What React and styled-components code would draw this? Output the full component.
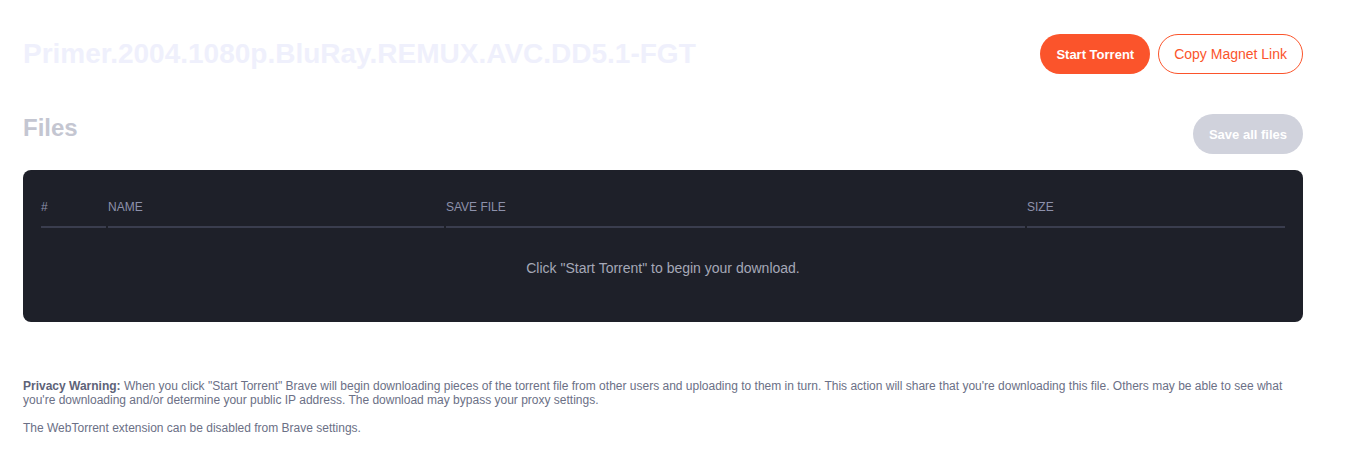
import React from 'react';
import styled, { createGlobalStyle } from 'styled-components';

const Global = createGlobalStyle`
  body {
    margin: 0;
    background: #ffffff;
    font-family: "Liberation Sans", Arial, sans-serif;
  }
`;

const Page = styled.div`
  width: 1280px;
  padding: 34px 23px 20px;
`;

const Header = styled.header`
  display: flex;
  align-items: center;
  justify-content: space-between;
  height: 40px;
`;

const Title = styled.h1`
  margin: 0;
  font-size: 28px;
  font-weight: bold;
  color: #eff0fc;
`;

const Actions = styled.div`
  display: flex;
  gap: 8px;
`;

const Button = styled.button`
  height: 40px;
  padding: 0 15px;
  border-radius: 20px;
  font-family: inherit;
  cursor: pointer;
  border: 1px solid ${p => (p.$variant === 'ghost' ? '#fb542b' : 'transparent')};
  background: ${p =>
    p.$variant === 'ghost' ? '#ffffff' : p.$variant === 'disabled' ? '#d0d2dc' : '#fb542b'};
  color: ${p => (p.$variant === 'ghost' ? '#fb542b' : '#ffffff')};
  font-weight: ${p => (p.$variant === 'ghost' ? 'normal' : 'bold')};
  font-size: ${p => (p.$variant === 'ghost' ? '14px' : '13px')};
`;

const SectionHead = styled.div`
  display: flex;
  align-items: flex-start;
  justify-content: space-between;
  height: 40px;
  margin-top: 40px;
  margin-bottom: 16px;
`;

const Heading = styled.h2`
  margin: 0;
  line-height: 28px;
  font-size: 24px;
  font-weight: bold;
  color: #c4c6d1;
`;

const Card = styled.div`
  background: #1e2029;
  border-radius: 8px;
  padding: 18px 18px 14px;
`;

const Grid = styled.div`
  display: grid;
  grid-template-columns: 65px 336px 579px 1fr;
  column-gap: 2px;
`;

const Th = styled.div`
  padding: 12px 0;
  line-height: 14px;
  font-size: 12px;
  text-transform: uppercase;
  color: #8d91ab;
  border-bottom: 2px solid #3a3d4e;
`;

const Empty = styled.div`
  grid-column: 1 / -1;
  padding: 32px 0;
  line-height: 16px;
  font-size: 14px;
  text-align: center;
  color: #a5a8b7;
`;

const Notice = styled.div`
  margin-top: 57px;
  font-size: 12px;
  line-height: 14px;
  color: #6b7086;

  p {
    margin: 0 0 14px;
  }

  strong {
    color: #5e6378;
  }
`;

export default function App() {
  return (
    <Page>
      <Global />
      <Header>
        <Title>Primer.2004.1080p.BluRay.REMUX.AVC.DD5.1-FGT</Title>
        <Actions>
          <Button>Start Torrent</Button>
          <Button $variant="ghost">Copy Magnet Link</Button>
        </Actions>
      </Header>

      <SectionHead>
        <Heading>Files</Heading>
        <Button $variant="disabled">Save all files</Button>
      </SectionHead>

      <Card>
        <Grid>
          <Th>#</Th>
          <Th>Name</Th>
          <Th>Save file</Th>
          <Th>Size</Th>
          <Empty>Click "Start Torrent" to begin your download.</Empty>
        </Grid>
      </Card>

      <Notice>
        <p>
          <strong>Privacy Warning:</strong> When you click "Start Torrent" Brave will begin downloading
          pieces of the torrent file from other users and uploading to them in turn. This action will
          share that you're downloading this file. Others may be able to see what you're downloading
          and/or determine your public IP address. The download may bypass your proxy settings.
        </p>
        <p>The WebTorrent extension can be disabled from Brave settings.</p>
      </Notice>
    </Page>
  );
}
